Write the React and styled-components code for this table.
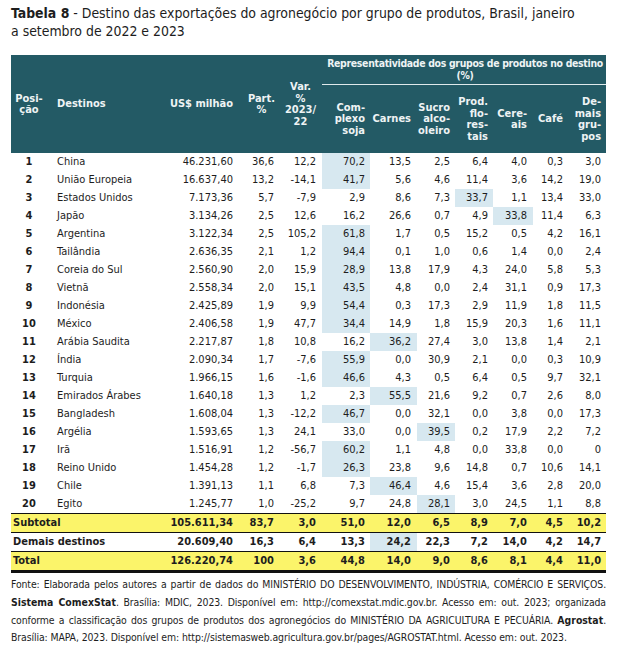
import React from 'react';
import styled, { createGlobalStyle } from 'styled-components';

const Global = createGlobalStyle`
  html, body { margin: 0; padding: 0; background: #ffffff; }
  body {
    font-family: "DejaVu Sans Condensed", "DejaVu Sans", sans-serif;
    color: #1d1d1d;
  }
`;

const Page = styled.div`
  width: 618px;
  box-sizing: border-box;
  padding: 4px 12px 0 11px;
`;

const Title = styled.h1`
  margin: 0;
  font-size: 13.9px;
  line-height: 18px;
  font-weight: normal;
  color: #1d1d1d;
  b { font-weight: bold; }
`;

const Table = styled.table`
  width: 595px;
  margin-top: 15px;
  border-collapse: collapse;
  table-layout: fixed;
  font-size: 11px;
`;

const Head = styled.thead`
  background: #235a65;
  color: #eef3f4;
`;

const Th = styled.th`
  font-weight: bold;
  font-size: 11px;
  line-height: 11.5px;
  padding: 0 ${(p) => p.$pr || 0}px 0 ${(p) => p.$pl || 0}px;
  text-align: ${(p) => p.$align || 'right'};
  vertical-align: middle;
  height: ${(p) => (p.$h ? `${p.$h}px` : 'auto')};
`;

const GroupTh = styled(Th)`
  text-align: center;
  height: 29px;
  padding: 0 0 0 2px;
  font-size: 10.4px;
  letter-spacing: -0.3px;
  white-space: nowrap;
  overflow: hidden;
  border-bottom: 1px solid #dfe9eb;
`;

const Row = styled.tr`
  height: 18px;
  background: ${(p) => (p.$yellow ? '#fbf46a' : 'transparent')};
  border-top: ${(p) => (p.$top ? `${p.$top}px solid #111` : 'none')};
  border-bottom: ${(p) => (p.$bottom ? `${p.$bottom}px solid #111` : 'none')};
`;

const Td = styled.td`
  padding: 0 ${(p) => p.$pr || 0}px 0 ${(p) => p.$pl || 0}px;
  text-align: ${(p) => p.$align || 'right'};
  font-weight: ${(p) => (p.$bold ? 'bold' : 'normal')};
  background: ${(p) => (p.$hl ? '#d7e8f0' : 'transparent')};
  white-space: nowrap;
  line-height: 18px;
  height: 18px;
  color: #1d1d1d;
`;

const Footnote = styled.p`
  margin: 3px 0 0;
  font-size: 10.4px;
  line-height: 17.8px;
  text-align: justify;
  color: #1d1d1d;
  letter-spacing: -0.1px;
  b { font-weight: bold; letter-spacing: 0; }
`;

const cols = [
  { w: 36, align: 'center', pr: 0, pl: 0 },
  { w: 113, align: 'left', pl: 10 },
  { w: 78, pr: 5 },
  { w: 41, pr: 5 },
  { w: 43, pr: 6 },
  { w: 48, pr: 5 },
  { w: 47, pr: 6 },
  { w: 38, pr: 5 },
  { w: 38, pr: 5 },
  { w: 40, pr: 6 },
  { w: 35, pr: 5 },
  { w: 38, pr: 5 },
];

// hl: index of the highlighted product column (0 = soja ... 6 = demais)
const rows = [
  ['1', 'China', '46.231,60', '36,6', '12,2', ['70,2', '13,5', '2,5', '6,4', '4,0', '0,3', '3,0'], 0],
  ['2', 'União Europeia', '16.637,40', '13,2', '-14,1', ['41,7', '5,6', '4,6', '11,4', '3,6', '14,2', '19,0'], 0],
  ['3', 'Estados Unidos', '7.173,36', '5,7', '-7,9', ['2,9', '8,6', '7,3', '33,7', '1,1', '13,4', '33,0'], 3],
  ['4', 'Japão', '3.134,26', '2,5', '12,6', ['16,2', '26,6', '0,7', '4,9', '33,8', '11,4', '6,3'], 4],
  ['5', 'Argentina', '3.122,34', '2,5', '105,2', ['61,8', '1,7', '0,5', '15,2', '0,5', '4,2', '16,1'], 0],
  ['6', 'Tailândia', '2.636,35', '2,1', '1,2', ['94,4', '0,1', '1,0', '0,6', '1,4', '0,0', '2,4'], 0],
  ['7', 'Coreia do Sul', '2.560,90', '2,0', '15,9', ['28,9', '13,8', '17,9', '4,3', '24,0', '5,8', '5,3'], 0],
  ['8', 'Vietnã', '2.558,34', '2,0', '15,1', ['43,5', '4,8', '0,0', '2,4', '31,1', '0,9', '17,3'], 0],
  ['9', 'Indonésia', '2.425,89', '1,9', '9,9', ['54,4', '0,3', '17,3', '2,9', '11,9', '1,8', '11,5'], 0],
  ['10', 'México', '2.406,58', '1,9', '47,7', ['34,4', '14,9', '1,8', '15,9', '20,3', '1,6', '11,1'], 0],
  ['11', 'Arábia Saudita', '2.217,87', '1,8', '10,8', ['16,2', '36,2', '27,4', '3,0', '13,8', '1,4', '2,1'], 1],
  ['12', 'Índia', '2.090,34', '1,7', '-7,6', ['55,9', '0,0', '30,9', '2,1', '0,0', '0,3', '10,9'], 0],
  ['13', 'Turquia', '1.966,15', '1,6', '-1,6', ['46,6', '4,3', '0,5', '6,4', '0,5', '9,7', '32,1'], 0],
  ['14', 'Emirados Árabes', '1.640,18', '1,3', '1,2', ['2,3', '55,5', '21,6', '9,2', '0,7', '2,6', '8,0'], 1],
  ['15', 'Bangladesh', '1.608,04', '1,3', '-12,2', ['46,7', '0,0', '32,1', '0,0', '3,8', '0,0', '17,3'], 0],
  ['16', 'Argélia', '1.593,65', '1,3', '24,1', ['33,0', '0,0', '39,5', '0,2', '17,9', '2,2', '7,2'], 2],
  ['17', 'Irã', '1.516,91', '1,2', '-56,7', ['60,2', '1,1', '4,8', '0,0', '33,8', '0,0', '0'], 0],
  ['18', 'Reino Unido', '1.454,28', '1,2', '-1,7', ['26,3', '23,8', '9,6', '14,8', '0,7', '10,6', '14,1'], 0],
  ['19', 'Chile', '1.391,13', '1,1', '6,8', ['7,3', '46,4', '4,6', '15,4', '3,6', '2,8', '20,0'], 1],
  ['20', 'Egito', '1.245,77', '1,0', '-25,2', ['9,7', '24,8', '28,1', '3,0', '24,5', '1,1', '8,8'], 2],
];

const totals = [
  { label: 'Subtotal', v: ['105.611,34', '83,7', '3,0'], g: ['51,0', '12,0', '6,5', '8,9', '7,0', '4,5', '10,2'], yellow: true, top: 1.5 },
  { label: 'Demais destinos', v: ['20.609,40', '16,3', '6,4'], g: ['13,3', '24,2', '22,3', '7,2', '14,0', '4,2', '14,7'], hl: 1, top: 1 },
  { label: 'Total', v: ['126.220,74', '100', '3,6'], g: ['44,8', '14,0', '9,0', '8,6', '8,1', '4,4', '11,0'], yellow: true, top: 1, bottom: 3 },
];

const groups = [
  ['Com-', 'plexo', 'soja'],
  ['Carnes'],
  ['Sucro', 'alco-', 'oleiro'],
  ['Prod.', 'flo-', 'res-', 'tais'],
  ['Cere-', 'ais'],
  ['Café'],
  ['De-', 'mais', 'gru-', 'pos'],
];

const Lines = ({ items }) =>
  items.map((t, i) => (
    <React.Fragment key={i}>
      {i > 0 && <br />}
      {t}
    </React.Fragment>
  ));

export default function App() {
  return (
    <Page>
      <Global />
      <Title>
        <b>Tabela 8</b> - Destino das exportações do agronegócio por grupo de produtos, Brasil, janeiro
        <br />
        a setembro de 2022 e 2023
      </Title>
      <Table>
        <colgroup>
          {cols.map((c, i) => (
            <col key={i} style={{ width: c.w }} />
          ))}
        </colgroup>
        <Head>
          <tr>
            <Th rowSpan={2} $align="center" $h={98}>
              <Lines items={['Posi-', 'ção']} />
            </Th>
            <Th rowSpan={2} $align="left" $pl={10}>Destinos</Th>
            <Th rowSpan={2} $pr={5}>US$ milhão</Th>
            <Th rowSpan={2} $align="center" $pl={6}>
              <Lines items={['Part.', '%']} />
            </Th>
            <Th rowSpan={2} $align="center">
              <Lines items={['Var.', '%', '2023/', '22']} />
            </Th>
            <GroupTh colSpan={7}>
              Representatividade dos grupos de produtos no destino
              <br />
              (%)
            </GroupTh>
          </tr>
          <tr>
            {groups.map((g, i) => (
              <Th key={i} $pr={cols[i + 5].pr} $h={68}>
                <Lines items={g} />
              </Th>
            ))}
          </tr>
        </Head>
        <tbody>
          {rows.map((r) => (
            <Row key={r[0]}>
              <Td $align="center" $bold>{r[0]}</Td>
              <Td $align="left" $pl={10}>{r[1]}</Td>
              <Td $pr={cols[2].pr}>{r[2]}</Td>
              <Td $pr={cols[3].pr}>{r[3]}</Td>
              <Td $pr={cols[4].pr}>{r[4]}</Td>
              {r[5].map((v, i) => (
                <Td key={i} $pr={cols[i + 5].pr} $hl={r[6] === i}>{v}</Td>
              ))}
            </Row>
          ))}
          {totals.map((t) => (
            <Row key={t.label} $yellow={t.yellow} $top={t.top} $bottom={t.bottom}>
              <Td colSpan={2} $align="left" $pl={2} $bold>{t.label}</Td>
              {t.v.map((v, i) => (
                <Td key={i} $pr={cols[i + 2].pr} $bold>{v}</Td>
              ))}
              {t.g.map((v, i) => (
                <Td key={'g' + i} $pr={cols[i + 5].pr} $hl={t.hl === i} $bold>{v}</Td>
              ))}
            </Row>
          ))}
        </tbody>
      </Table>
      <Footnote>
        Fonte: Elaborada pelos autores a partir de dados do MINISTÉRIO DO DESENVOLVIMENTO, INDÚSTRIA, COMÉRCIO E SERVIÇOS. <b>Sistema ComexStat</b>. Brasília: MDIC, 2023. Disponível em: http://comexstat.mdic.gov.br. Acesso em: out. 2023; organizada conforme a classificação dos grupos de produtos dos agronegócios do MINISTÉRIO DA AGRICULTURA E PECUÁRIA. <b>Agrostat</b>. Brasília: MAPA, 2023. Disponível em: http://sistemasweb.agricultura.gov.br/pages/AGROSTAT.html. Acesso em: out. 2023.
      </Footnote>
    </Page>
  );
}
